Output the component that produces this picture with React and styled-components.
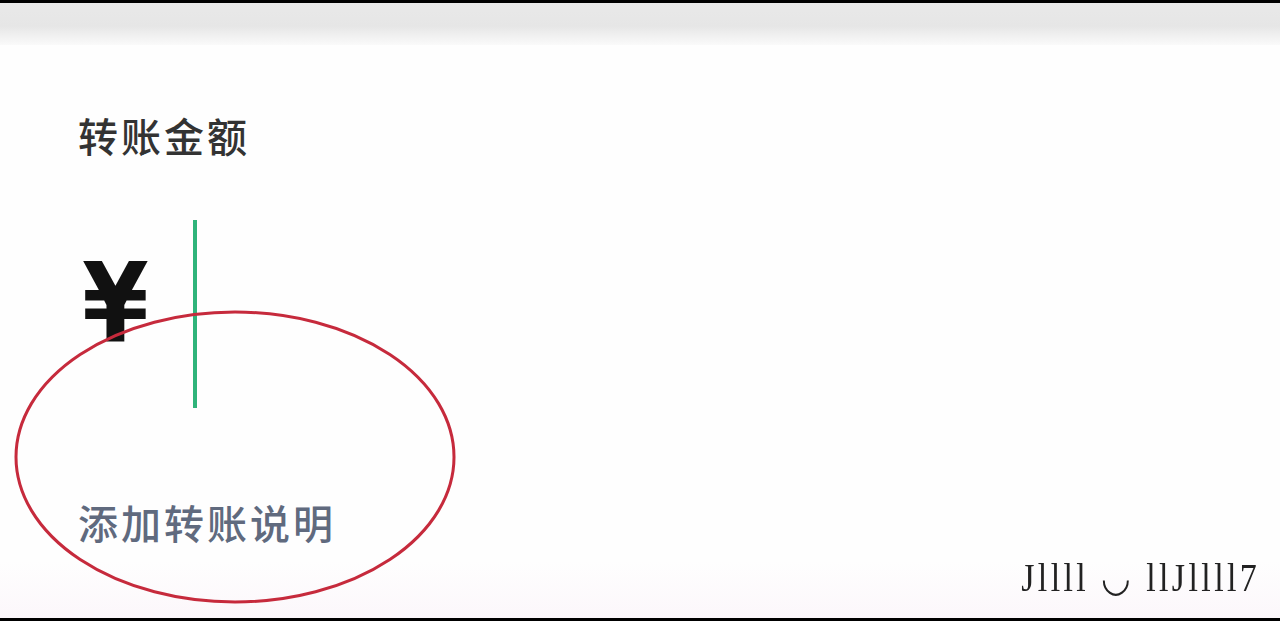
import styled, { createGlobalStyle } from 'styled-components';

const Global = createGlobalStyle`
  html, body { margin: 0; padding: 0; background: #000; }
  body { font-family: "Noto Sans CJK SC", "Noto Sans", sans-serif; }
`;

const Screen = styled.div`
  position: relative;
  width: 1280px;
  height: 621px;
  overflow: hidden;
  display: flex;
  flex-direction: column;
  border-top: 3px solid #000;
  border-bottom: 3px solid #000;
  box-sizing: border-box;
  background: #fefefe;
`;

const TopShade = styled.div`
  height: 42px;
  flex-shrink: 0;
  background: linear-gradient(to bottom, #e9e9e9 0%, #e6e6e6 55%, #fafafa 100%);
`;

const Body = styled.div`
  flex: 1;
  display: flex;
  flex-direction: column;
  padding: 62px 0 0 78px;
  background: linear-gradient(to bottom, #fefefe 90%, #fcf7fb 100%);
`;

const Label = styled.div`
  font-size: 40px;
  font-weight: 500;
  line-height: 56px;
  color: ${(p) => p.color || '#333'};
  letter-spacing: 3px;
`;

const AmountRow = styled.div`
  display: flex;
  align-items: flex-start;
  margin-top: 57px;
  height: 188px;
`;

const Yen = styled.div`
  font-family: "DejaVu Sans", "Liberation Sans", sans-serif;
  font-weight: 700;
  font-size: 96px;
  line-height: 96px;
  color: #111;
  margin: 28px 0 0 4px;
  transform: scaleY(1.15);
  transform-origin: top;
`;

const Caret = styled.div`
  width: 4px;
  height: 188px;
  background: #2fb47a;
  margin-left: 44px;
`;

const Note = styled(Label)`
  margin-top: 86px;
`;

const Mark = styled.svg`
  position: absolute;
  left: 0;
  top: 0;
  pointer-events: none;
`;

const Watermark = styled.div`
  position: absolute;
  right: 20px;
  bottom: 20px;
  font-family: "Liberation Serif", serif;
  font-size: 40px;
  line-height: 40px;
  color: #222;
  letter-spacing: 4px;
  white-space: nowrap;
  transform: scaleX(0.85);
  transform-origin: right bottom;
  filter: blur(0.7px);
`;

export default function App() {
  return (
    <>
      <Global />
      <Screen>
        <TopShade />
        <Body>
          <Label>转账金额</Label>
          <AmountRow>
            <Yen>¥</Yen>
            <Caret />
          </AmountRow>
          <Note color="#606a7e">添加转账说明</Note>
        </Body>
        <Mark width="1280" height="621">
          <ellipse cx="235" cy="454" rx="219" ry="145" fill="none" stroke="#c62a3c" strokeWidth="3" />
        </Mark>
        <Watermark>Jllll ◡ llJllll7</Watermark>
      </Screen>
    </>
  );
}
